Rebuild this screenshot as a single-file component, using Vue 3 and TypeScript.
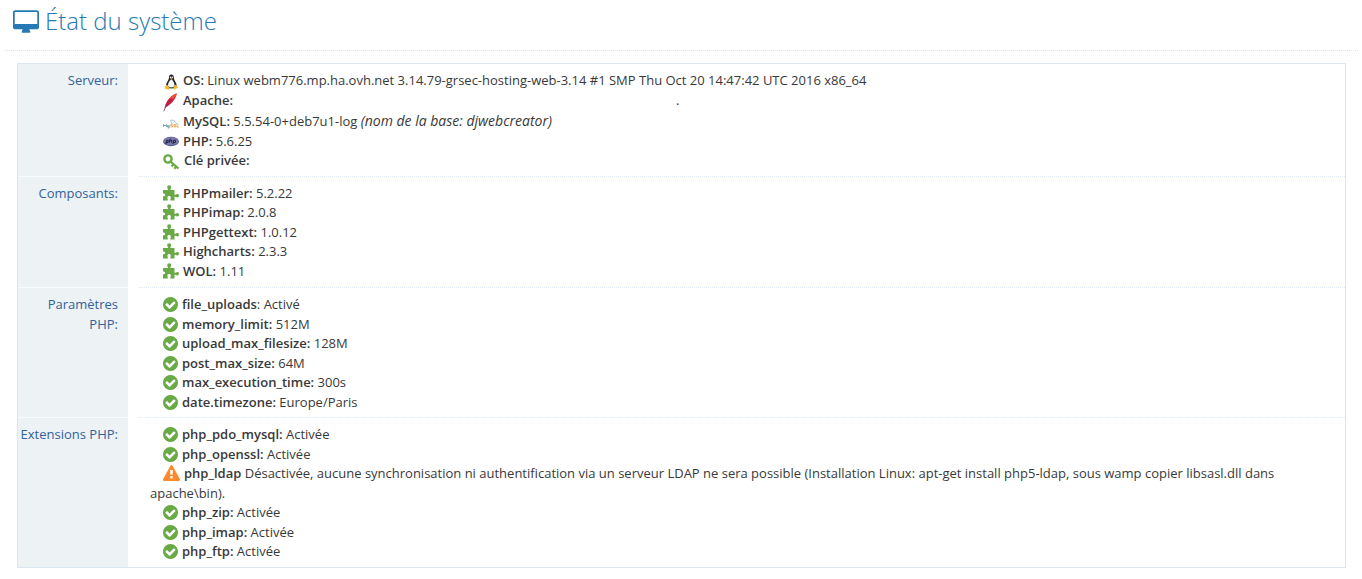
<script setup lang="ts">
type IconName = 'linux' | 'apache' | 'mysql' | 'php' | 'key' | 'puzzle' | 'ok' | 'warning'

interface Entry {
  icon: IconName
  label: string
  value?: string
  note?: string
  suffix?: string
}

interface Section {
  title: string
  entries: Entry[]
}

const sections: Section[] = [
  {
    title: 'Serveur:',
    entries: [
      { icon: 'linux', label: 'OS:', value: 'Linux webm776.mp.ha.ovh.net 3.14.79-grsec-hosting-web-3.14 #1 SMP Thu Oct 20 14:47:42 UTC 2016 x86_64' },
      { icon: 'apache', label: 'Apache:', suffix: '.' },
      { icon: 'mysql', label: 'MySQL:', value: '5.5.54-0+deb7u1-log', note: '(nom de la base: djwebcreator)' },
      { icon: 'php', label: 'PHP:', value: '5.6.25' },
      { icon: 'key', label: 'Clé privée:' },
    ],
  },
  {
    title: 'Composants:',
    entries: [
      { icon: 'puzzle', label: 'PHPmailer:', value: '5.2.22' },
      { icon: 'puzzle', label: 'PHPimap:', value: '2.0.8' },
      { icon: 'puzzle', label: 'PHPgettext:', value: '1.0.12' },
      { icon: 'puzzle', label: 'Highcharts:', value: '2.3.3' },
      { icon: 'puzzle', label: 'WOL:', value: '1.11' },
    ],
  },
  {
    title: 'Paramètres PHP:',
    entries: [
      { icon: 'ok', label: 'file_uploads', value: ': Activé' },
      { icon: 'ok', label: 'memory_limit:', value: '512M' },
      { icon: 'ok', label: 'upload_max_filesize:', value: '128M' },
      { icon: 'ok', label: 'post_max_size:', value: '64M' },
      { icon: 'ok', label: 'max_execution_time:', value: '300s' },
      { icon: 'ok', label: 'date.timezone:', value: 'Europe/Paris' },
    ],
  },
  {
    title: 'Extensions PHP:',
    entries: [
      { icon: 'ok', label: 'php_pdo_mysql:', value: 'Activée' },
      { icon: 'ok', label: 'php_openssl:', value: 'Activée' },
      { icon: 'warning', label: 'php_ldap', value: 'Désactivée, aucune synchronisation ni authentification via un serveur LDAP ne sera possible (Installation Linux: apt-get install php5-ldap, sous wamp copier libsasl.dll dans apache\\bin).' },
      { icon: 'ok', label: 'php_zip:', value: 'Activée' },
      { icon: 'ok', label: 'php_imap:', value: 'Activée' },
      { icon: 'ok', label: 'php_ftp:', value: 'Activée' },
    ],
  },
]

const valueText = (entry: Entry): string => {
  if (!entry.value) return ''
  const lead = entry.value.startsWith(':') ? '' : ' '
  return lead + entry.value + (entry.note ? ' ' : '')
}
</script>

<template>
  <main class="page">
    <header class="page-header">
      <h1>
        <svg class="desktop" viewBox="0 0 1920 1664" aria-hidden="true">
          <path d="M1792 992v-832q0-13-9.500-22.500t-22.500-9.500h-1600q-13 0-22.500 9.500t-9.500 22.500v832q0 13 9.500 22.500t22.500 9.500h1600q13 0 22.500-9.500t9.500-22.500zM1920 160v1088q0 66-47 113t-113 47h-544q0 37 16 77.500t32 71t16 43.500q0 26-19 45t-45 19h-512q-26 0-45-19t-19-45q0-14 16-44t32-70t16-78h-544q-66 0-113-47t-47-113v-1088q0-66 47-113t113-47h1600q66 0 113 47t47 113z" />
        </svg>
        <span>État du système</span>
      </h1>
    </header>

    <dl class="info">
      <div v-for="section in sections" :key="section.title" class="row">
        <dt>{{ section.title }}</dt>
        <dd>
          <div v-for="entry in section.entries" :key="entry.label" class="entry" :class="'entry-' + entry.icon">
            <svg v-if="entry.icon === 'linux'" class="icon" viewBox="0 0 16 16" aria-hidden="true">
              <path d="M8.300 .5C6.600 .5 5.900 1.800 6 3.600C6.100 5.800 4 7.500 3.200 10.300C2.800 12 4 14.500 8.300 14.500S14 12 13.500 10.300C12.700 7.500 10.700 5.800 10.800 3.600C10.900 1.800 10 .5 8.300 .5Z" fill="#26262a" />
              <path d="M8.300 5.500C6.500 6.500 4.900 9 4.900 11.500C5.500 14 11 14 11.600 11.500C11.600 9 10.100 6.500 8.300 5.500Z" fill="#f6f6f6" />
              <circle cx="7.500" cy="3.200" r=".8" fill="#fff" />
              <circle cx="9.300" cy="3.200" r=".8" fill="#fff" />
              <path d="M7 4.600L8.400 3.900L9.800 4.700L8.400 5.900Z" fill="#e9a820" />
              <path d="M2 12.200L4 10.800L7 14.200L5.800 15.800L1.800 14.800ZM14.500 11.900L12.400 10.800L10 14.200L11 15.800L15 13.800Z" fill="#f3c02c" />
            </svg>
            <svg v-else-if="entry.icon === 'apache'" class="icon feather" viewBox="0 0 16 19" aria-hidden="true">
              <path d="M13.800 .5C9 1.500 4.500 6 2.500 12L3.800 13.700C8.500 10.500 12.500 6.500 13.800 .5Z" fill="#d3173f" />
              <path d="M13.800 .5C11 1 8.700 2.800 6.800 5.300L9 6.500C11.500 4.800 13.200 3 13.800 .5Z" fill="#e9552f" />
              <path d="M2.800 11L4.300 13L1.500 15.500Z" fill="#8e2267" />
              <path d="M9 5L3.500 12L.7 18.300" fill="none" stroke="#8b3049" stroke-width=".8" />
            </svg>
            <svg v-else-if="entry.icon === 'mysql'" class="icon" viewBox="0 0 16 16" aria-hidden="true">
              <path d="M.5 12V9.500L2 11L3.500 9.500V12M4.500 10.200V12H6V10.200V13H4.700" fill="none" stroke="#6a9fba" stroke-width=".9" />
              <path d="M9.500 9.500H7.800V10.700H9.500V12H7.500M11 9.500H12.700V12H11ZM14 9.500V12H16" fill="none" stroke="#efa44b" stroke-width=".9" />
              <path d="M7 5.500C9.500 4.500 11.500 5.500 12.500 7.500L15.500 9.500M8 6.500L9 9" fill="none" stroke="#86b2c7" stroke-width=".8" />
            </svg>
            <svg v-else-if="entry.icon === 'php'" class="icon" viewBox="0 0 16 16" aria-hidden="true">
              <ellipse cx="8" cy="8.500" rx="8" ry="4.700" fill="#5c5e8d" />
              <ellipse cx="8" cy="8.200" rx="7.200" ry="3.900" fill="#777aaa" />
              <path d="M2.800 11L3.600 7.300H5.300L5 9.500H3.400M7.200 5.700L6.400 9.700M7 7.300H8.900L8.400 9.700M9.900 11L10.700 7.300H12.700L12.300 9.500H10.400" fill="none" stroke="#20203c" />
            </svg>
            <svg v-else-if="entry.icon === 'key'" class="icon wide" viewBox="0 0 17 16" aria-hidden="true">
              <circle cx="5" cy="5" r="3.600" fill="none" stroke="#69aa46" stroke-width="2.400" />
              <path d="M7.500 7.500L15.500 14.500M10.800 10L8.500 12.500M13.500 12.300L11.300 14.800" fill="none" stroke="#69aa46" stroke-width="2.200" />
            </svg>
            <svg v-else-if="entry.icon === 'puzzle'" class="icon" viewBox="0 0 16 16" aria-hidden="true">
              <path d="M0 5H4.900C5.700 4.300 4.200 3.600 4.200 2.200C4.200 .9 5 .2 6.200 .2S8.200 .9 8.200 2.200C8.200 3.600 6.700 4.300 7.500 5H11.500V9.500C12.300 10.500 13 9 14.200 9C15.400 9 16 9.700 16 10.700S15.400 12.400 14.200 12.400C13 12.400 12.300 11.100 11.500 12V15.500H7.500C6.900 14.800 7.800 13.900 7.800 12.700C7.800 11.600 7.200 11 6.100 11S4.400 11.600 4.400 12.700C4.400 13.900 5.300 14.800 4.700 15.500H0V11.500C.8 11 2.200 11.400 2.200 10S.8 8.700 0 8.200Z" fill="#69aa46" />
            </svg>
            <svg v-else-if="entry.icon === 'ok'" class="icon check" viewBox="128 128 1536 1536" aria-hidden="true">
              <path fill="#69aa46" d="M1412 734q0-28-18-46l-91-90q-19-19-45-19t-45 19l-408 407-226-226q-19-19-45-19t-45 19l-91 90q-18 18-18 46 0 27 18 45l362 362q19 19 45 19 27 0 46-19l543-543q18-18 18-45zm252 162q0 209-103 385.500t-279.500 279.500-385.500 103-385.500-103-279.500-279.500-103-385.500 103-385.500 279.500-279.500 385.500-103 385.500 103 279.500 279.500 103 385.500z" />
            </svg>
            <svg v-else class="icon wide" viewBox="0 0 1792 1664" aria-hidden="true">
              <path fill="#ff892a" d="M1024 1375v-190q0-14-9.500-23.500t-22.500-9.500h-192q-13 0-22.500 9.500t-9.500 23.500v190q0 14 9.500 23.500t22.500 9.500h192q13 0 22.500-9.500t9.500-23.500zm-2-374l18-459q0-12-10-19-13-11-24-11h-220q-11 0-24 11-10 7-10 21l17 457q0 10 10 16.500t24 6.500h185q14 0 23.500-6.500t10.500-16.500zm-14-934l768 1408q35 63-2 126-17 29-46.500 46t-63.500 17h-1536q-34 0-63.500-17t-46.500-46q-37-63-2-126l768-1408q17-31 47-49t65-18 65 18 47 49z" />
            </svg>
            <b>{{ entry.label }}</b>{{ valueText(entry) }}<i v-if="entry.note">{{ entry.note }}</i><span v-if="entry.suffix" class="suffix">{{ entry.suffix }}</span>
          </div>
        </dd>
      </div>
    </dl>
  </main>
</template>

<style>
body {
  margin: 0;
  background: #fff;
}
</style>

<style scoped>
.page {
  padding: 0 4px 0 5px;
  font-family: "Open Sans", "Noto Sans", sans-serif;
  font-size: 13px;
  line-height: 1.5;
  color: #393939;
}

.page-header {
  padding: 4px 8px 12px;
  border-bottom: 1px dotted #e2e2e2;
}

h1 {
  display: flex;
  align-items: center;
  gap: 6px;
  margin: 0;
  font-size: 24px;
  font-weight: 300;
  line-height: 34px;
  color: #2679b5;
}

.desktop {
  width: 26px;
  height: 23px;
  fill: currentColor;
}

.info {
  margin: 12px 12px 0;
  border: 1px solid #dce8f1;
}

.row {
  display: flex;
  gap: 11px;
}

dt {
  box-sizing: border-box;
  width: 110px;
  flex: none;
  padding: 7px 10px 5px 0;
  border-top: 1px solid #f7fbff;
  background: #edf3f4;
  color: #336199;
  text-align: right;
}

dd {
  flex: 1;
  min-width: 0;
  margin: 0;
  padding: 7px 4px 5px 11px;
  border-top: 1px dotted #dcebf7;
}

.row:first-child dt,
.row:first-child dd {
  border-top: 0;
}

.entry {
  text-indent: 13px;
}

.entry b {
  font-weight: 600;
}

.entry i {
  font-size: 14px;
  line-height: 1;
}

.entry-apache {
  padding-bottom: 2px;
}

.entry-puzzle:last-child {
  padding-bottom: 1px;
}

.icon {
  width: 16px;
  height: 16px;
  margin: -2px 4px -2px 0;
  vertical-align: -3px;
}

.check {
  width: 15px;
  height: 15px;
}

.wide {
  width: 17px;
}

.entry-php .icon,
.entry-puzzle .icon,
.entry-ok .icon,
.entry-warning .icon {
  vertical-align: -1px;
}

.feather {
  height: 19px;
  margin: -4px 4px -4px 0;
}

.suffix {
  margin-left: 37.2%;
}
</style>
